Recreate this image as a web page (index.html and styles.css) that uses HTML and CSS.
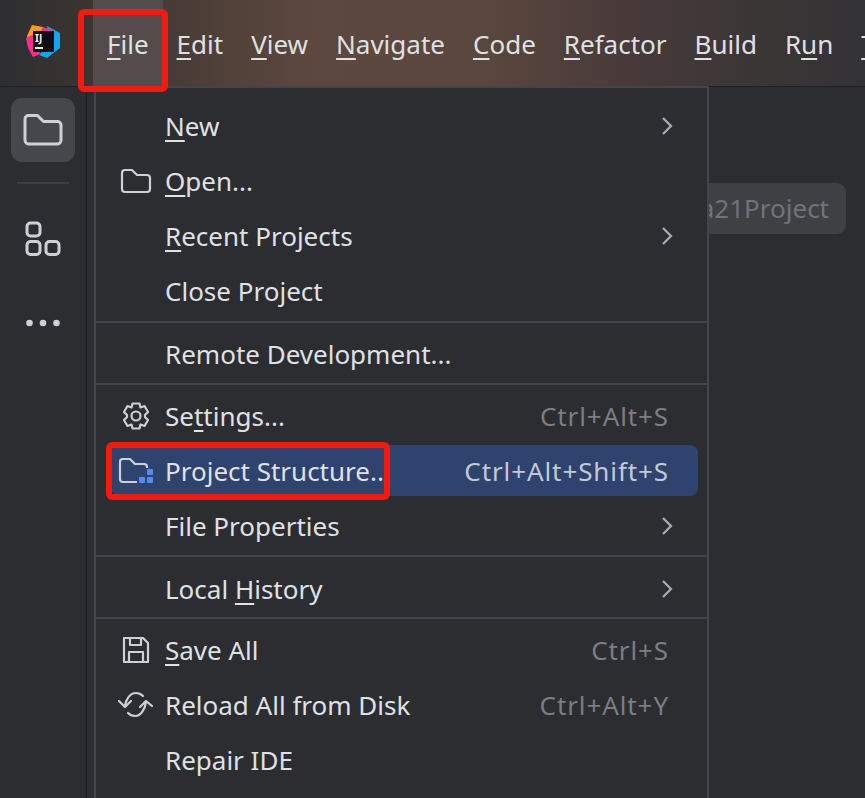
FILE: index.html
```html
<!DOCTYPE html>
<html lang="en">
<head>
<meta charset="utf-8">
<title>IDE File Menu</title>
<link rel="stylesheet" href="styles.css">
</head>
<body>
<div class="app">
  <header class="titlebar">
    <div class="logo-slot">
      <svg class="logo" width="36" height="36" viewBox="0 0 36 36">
        <polygon points="2,12 7,1 18,3 16,18 4,17" fill="#ff9a1f"/>
        <polygon points="1,14 9,10 15,30 8,33 3,24" fill="#ff2d8f"/>
        <polygon points="22,2 35,9 35,24 22,34 14,31 24,20" fill="#12a5f0"/>
        <polygon points="18,3 28,6 26,12 14,10" fill="#f2318c"/>
        <rect x="8" y="7" width="21" height="21" fill="#0d0d12"/>
        <text x="10" y="18" class="logo-text">IJ</text>
        <rect x="10" y="23" width="8" height="2" fill="#e8e8e8"/>
      </svg>
    </div>
    <nav class="menubar">
      <span class="menubar-item active"><u>F</u>ile</span>
      <span class="menubar-item"><u>E</u>dit</span>
      <span class="menubar-item"><u>V</u>iew</span>
      <span class="menubar-item"><u>N</u>avigate</span>
      <span class="menubar-item"><u>C</u>ode</span>
      <span class="menubar-item"><u>R</u>efactor</span>
      <span class="menubar-item"><u>B</u>uild</span>
      <span class="menubar-item">R<u>u</u>n</span>
      <span class="menubar-item"><u>T</u>ools</span>
    </nav>
  </header>
  <div class="workspace">
    <aside class="sidebar">
      <button class="tool-button selected" aria-label="Project">
        <svg width="40" height="34" viewBox="0 0 40 34" fill="none" stroke="#ced0d6" stroke-width="3" stroke-linejoin="round">
          <path d="M2 6a3.500 3.500 0 0 1 3.500-3.500h9l6 6h14a3.500 3.500 0 0 1 3.500 3.500v15a4 4 0 0 1-4 4h-28a4 4 0 0 1-4-4z"/>
        </svg>
      </button>
      <div class="tool-divider"></div>
      <button class="tool-button" aria-label="Plugins">
        <svg width="36" height="36" viewBox="0 0 36 36" fill="none" stroke="#ced0d6" stroke-width="3">
          <rect x="2" y="2" width="13" height="13" rx="3.500"/>
          <rect x="2" y="20.500" width="13" height="13" rx="3.500"/>
          <rect x="21" y="20.500" width="13" height="13" rx="3.500"/>
        </svg>
      </button>
      <button class="tool-button more" aria-label="More">
        <svg width="36" height="8" viewBox="0 0 36 8" fill="#ced0d6">
          <circle cx="4.500" cy="4" r="3.300"/><circle cx="18" cy="4" r="3.300"/><circle cx="31.500" cy="4" r="3.300"/>
        </svg>
      </button>
    </aside>
    <main class="editor">
      <div class="chip">java21Project</div>
    </main>
    <section class="menu">
      <div class="row"><span class="icon"></span><span class="label"><u>N</u>ew</span><svg class="chev" width="12" height="20" viewBox="0 0 12 20"><path d="M2 2l8 8-8 8"/></svg></div>
      <div class="row"><span class="icon"><svg width="32" height="26" viewBox="0 0 32 26" fill="none" stroke="#ced0d6" stroke-width="2.200" stroke-linejoin="round"><path d="M2 5a3 3 0 0 1 3-3h7l5 5h10a3 3 0 0 1 3 3v11a3 3 0 0 1-3 3h-22a3 3 0 0 1-3-3z"/></svg></span><span class="label"><u>O</u>pen...</span></div>
      <div class="row"><span class="icon"></span><span class="label"><u>R</u>ecent Projects</span><svg class="chev" width="12" height="20" viewBox="0 0 12 20"><path d="M2 2l8 8-8 8"/></svg></div>
      <div class="row"><span class="icon"></span><span class="label">Close Project</span></div>
      <div class="sep"></div>
      <div class="row"><span class="icon"></span><span class="label">Remote Development...</span></div>
      <div class="sep tight"></div>
      <div class="row"><span class="icon"><svg width="30" height="30" viewBox="0 0 30 30" fill="none" stroke="#ced0d6" stroke-width="2.200" stroke-linejoin="round"><path d="M11.500 2.500h7l1 4 4-1.500 3.500 6-3 3v2l3 3-3.500 6-4-1.500-1 4h-7l-1-4-4 1.500-3.500-6 3-3v-2l-3-3 3.500-6 4 1.500z"/><circle cx="15" cy="15" r="4.500"/></svg></span><span class="label">Se<u>t</u>tings...</span><span class="shortcut">Ctrl+Alt+S</span></div>
      <div class="row highlighted"><span class="icon"><svg width="36" height="30" viewBox="0 0 36 30"><path d="M2 23V6a3 3 0 0 1 3-3h7l5 5h9a3 3 0 0 1 3 3v1M19 26H5a3 3 0 0 1-3-3" fill="none" stroke="#ced0d6" stroke-width="2.200" stroke-linejoin="round"/><rect x="21" y="21" width="6" height="6" rx="1" fill="#548af7"/><rect x="29" y="21" width="6" height="6" rx="1" fill="#548af7"/><rect x="29" y="13" width="6" height="6" rx="1" fill="#548af7"/></svg></span><span class="label">Project Structure...</span><span class="shortcut">Ctrl+Alt+Shift+S</span></div>
      <div class="row"><span class="icon"></span><span class="label">File Properties</span><svg class="chev" width="12" height="20" viewBox="0 0 12 20"><path d="M2 2l8 8-8 8"/></svg></div>
      <div class="sep"></div>
      <div class="row"><span class="icon"></span><span class="label">Local <u>H</u>istory</span><svg class="chev" width="12" height="20" viewBox="0 0 12 20"><path d="M2 2l8 8-8 8"/></svg></div>
      <div class="sep tight"></div>
      <div class="row"><span class="icon"><svg width="28" height="28" viewBox="0 0 28 28" fill="none" stroke="#ced0d6" stroke-width="2.200" stroke-linejoin="round"><path d="M2 2h19l5 5v19h-24z"/><path d="M8 2v7h11v-7M7 26v-10h14v10"/></svg></span><span class="label"><u>S</u>ave All</span><span class="shortcut">Ctrl+S</span></div>
      <div class="row"><span class="icon"><svg width="36" height="30" viewBox="0 0 36 30" fill="none" stroke="#ced0d6" stroke-width="2.200" stroke-linecap="round" stroke-linejoin="round"><path d="M7 16C8 9 12 3 18 3c3 0 5 1 7 3"/><path d="M1 11l6 6 6-6"/><path d="M28 12c-1 7-5 14-11 14-3 0-5-1-7-3"/><path d="M22 17l6-6 6 5"/></svg></span><span class="label">Reload All from Disk</span><span class="shortcut">Ctrl+Alt+Y</span></div>
      <div class="row"><span class="icon"></span><span class="label">Repair IDE</span></div>
    </section>
    <div class="callout callout-file"></div>
    <div class="callout callout-structure"></div>
  </div>
</div>
</body>
</html>
```
FILE: styles.css
```css
* { box-sizing: border-box; }
html, body { margin: 0; height: 100%; overflow: hidden; }
body {
  background: #2b2d30;
  color: #dfe1e5;
  font-family: "Noto Sans", "Open Sans", sans-serif;
  font-size: 26px;
}
u { text-underline-offset: 4px; text-decoration-thickness: 2px; }
.app { height: 798px; display: flex; flex-direction: column; }

.titlebar {
  height: 87px;
  flex: none;
  display: flex;
  border-bottom: 1px solid #1e1f22;
  background: linear-gradient(90deg, #2d2e31 0, #37322f 60px, #5c483e 310px, #5a473d 480px, #47393a 640px, #3a3636 760px, #333234 865px);
  overflow: hidden;
}
.logo-slot { width: 93px; flex: none; display: flex; align-items: center; padding: 0 0 2px 25px; }
.logo-text { font: bold 10px "Noto Sans", sans-serif; fill: #f0f0f0; }
.menubar { display: flex; white-space: nowrap; }
.menubar-item { display: flex; align-items: center; padding: 2px 14px 0; }
.menubar-item u { display: inline; }
.menubar-item.active { background: #534c4a; }

.workspace { flex: 1; position: relative; display: flex; min-height: 0; }
.sidebar {
  width: 87px;
  flex: none;
  border-right: 1px solid #1e1f22;
  display: flex;
  flex-direction: column;
  align-items: center;
  padding: 11px 0 0 0;
}
.tool-button {
  width: 64px;
  height: 64px;
  border: 0;
  padding: 0;
  background: none;
  border-radius: 11px;
  display: flex;
  align-items: center;
  justify-content: center;
}
.tool-button.selected { background: #45474b; }
.tool-divider { width: 52px; height: 2px; background: #3c3e42; margin: 20px 0 23px; }
.tool-button.more { margin-top: 20px; }

.editor { flex: 1; display: flex; justify-content: flex-end; align-items: flex-start; padding: 96px 19px 0 0; overflow: hidden; }
.chip {
  height: 51px;
  line-height: 50px;
  padding: 0 17px;
  border-radius: 9px;
  background: #3e4044;
  color: #6f737a;
}

.menu {
  position: absolute;
  left: 94px;
  top: -1px;
  width: 615px;
  height: 720px;
  padding: 10.500px 9px 0 15px;
  background: #2b2d30;
  border: 2px solid #43454a;
  border-bottom: 0;
}
.row {
  height: 55.100px;
  display: flex;
  align-items: center;
  padding: 0 29px 0 5px;
  border-radius: 8px;
}
.row.highlighted { background: #2e436e; height: 51px; margin: 2px 0; }
.icon { width: 39px; height: 34px; margin-right: 10px; flex: none; display: flex; align-items: center; justify-content: center; }
.label { flex: 1; white-space: nowrap; }
.shortcut { color: #7a7e85; white-space: nowrap; letter-spacing: 0.900px; }
.row.highlighted .shortcut { color: #c5c9d2; }
.chev { fill: none; stroke: #a8adb5; stroke-width: 2.200px; margin-right: -4px; }
.sep { height: 2px; background: #43454a; margin: 2px -9px 4px -15px; }
.sep.tight { margin: 1px -9px 3px -15px; }

.callout { position: absolute; border: 6px solid #f5190f; border-radius: 6px; }
.callout-file { left: 78px; top: -78px; width: 90px; height: 83px; }
.callout-structure { left: 106px; top: 355px; width: 284px; height: 58px; }
```
